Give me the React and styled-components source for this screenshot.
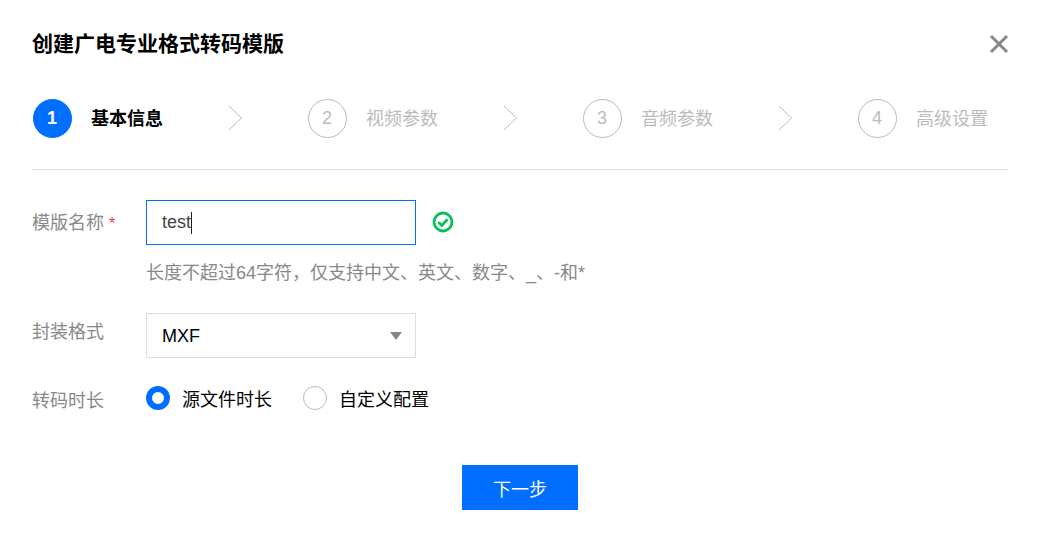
import React from 'react'
import styled, { createGlobalStyle } from 'styled-components'

const steps = [
  { num: 1, label: '基本信息', active: true },
  { num: 2, label: '视频参数' },
  { num: 3, label: '音频参数' },
  { num: 4, label: '高级设置' },
]

export default function App() {
  return (
    <>
      <GlobalStyle />
      <Dialog>
        <Header>
          <Title>创建广电专业格式转码模版</Title>
          <CloseIcon viewBox="0 0 20 20">
            <path d="M2 2 L18 18 M18 2 L2 18" />
          </CloseIcon>
        </Header>

        <Steps>
          {steps.map((step, index) => (
            <React.Fragment key={step.num}>
              <Step>
                <StepNum $active={step.active}>{step.num}</StepNum>
                <StepLabel $active={step.active}>{step.label}</StepLabel>
              </Step>
              {index < steps.length - 1 && (
                <Chevron viewBox="0 0 15 26">
                  <path d="M1 1 L13.5 13 L1 25" />
                </Chevron>
              )}
            </React.Fragment>
          ))}
        </Steps>

        <Form>
          <Row>
            <Label $lh={46}>
              模版名称<Star>*</Star>
            </Label>
            <Control>
              <InputRow>
                <InputBox>
                  test<Caret />
                </InputBox>
                <CheckIcon viewBox="0 0 22 22">
                  <circle cx="11" cy="11" r="9" />
                  <path d="M6.5 11.2 L9.8 14.4 L15.5 8.2" />
                </CheckIcon>
              </InputRow>
              <Hint>长度不超过64字符，仅支持中文、英文、数字、_、-和*</Hint>
            </Control>
          </Row>

          <Row $top={28}>
            <Label $lh={38}>封装格式</Label>
            <SelectBox>
              MXF
              <Arrow />
            </SelectBox>
          </Row>

          <RadioRow>
            <Label $lh={50}>转码时长</Label>
            <RadioGroup>
              <RadioItem>
                <Radio $checked />
                源文件时长
              </RadioItem>
              <RadioItem>
                <Radio />
                自定义配置
              </RadioItem>
            </RadioGroup>
          </RadioRow>
        </Form>

        <Footer>
          <NextButton>下一步</NextButton>
        </Footer>
      </Dialog>
    </>
  )
}

const GlobalStyle = createGlobalStyle`
    html, body {
        margin: 0;
        padding: 0;
        background: #fff;
    }
    body {
        font-family: "Liberation Sans", "Noto Sans CJK SC", sans-serif;
    }
`

const Dialog = styled.div`
    width: 1039px;
    height: 534px;
    box-sizing: border-box;
    padding: 30px 31px 0 32px;
    overflow: hidden;
`

const Header = styled.div`
    display: flex;
    align-items: center;
    justify-content: space-between;
    height: 28px;
`

const Title = styled.h2`
    margin: 0;
    font-size: 21px;
    line-height: 28px;
    font-weight: 700;
    color: #000;
`

const CloseIcon = styled.svg`
    width: 20px;
    height: 20px;
    margin-right: -1px;
    fill: none;
    stroke: #888;
    stroke-width: 3;
`

const Steps = styled.div`
    display: flex;
    align-items: center;
    height: 40px;
    margin-top: 40px;
    padding: 0 20px 31px 1px;
    border-bottom: 1px solid #ddd;
`

const Step = styled.div`
    display: flex;
    align-items: center;
    gap: 19px;
    width: 195px;
    flex: none;
    &:last-child {
        width: auto;
    }
`

const StepNum = styled.span`
    width: 39px;
    height: 39px;
    box-sizing: border-box;
    padding-right: 1px;
    border-radius: 50%;
    display: flex;
    align-items: center;
    justify-content: center;
    font-size: 18px;
    font-weight: ${(props) => (props.$active ? 700 : 400)};
    color: ${(props) => (props.$active ? '#fff' : '#bbb')};
    background: ${(props) => (props.$active ? '#006eff' : '#fff')};
    border: 1px solid ${(props) => (props.$active ? '#006eff' : '#bbb')};
`

const StepLabel = styled.span`
    font-size: 18px;
    line-height: 24px;
    padding-top: 1px;
    font-weight: ${(props) => (props.$active ? 700 : 400)};
    color: ${(props) => (props.$active ? '#000' : '#bbb')};
`

const Chevron = styled.svg`
    width: 15px;
    height: 26px;
    margin-right: 65px;
    flex: none;
    fill: none;
    stroke: #bbb;
    stroke-width: 1;
`

const Form = styled.div`
    margin-top: 30px;
`

const Row = styled.div`
    display: flex;
    margin-top: ${(props) => props.$top || 0}px;
`

const Label = styled.div`
    width: 114px;
    flex: none;
    align-self: flex-start;
    font-size: 18px;
    line-height: ${(props) => props.$lh}px;
    color: #888;
`

const Star = styled.span`
    margin-left: 5px;
    font-size: 16px;
    color: #e54545;
`

const Control = styled.div`
    display: flex;
    flex-direction: column;
`

const InputRow = styled.div`
    display: flex;
    align-items: center;
    gap: 16px;
`

const InputBox = styled.div`
    width: 270px;
    height: 45px;
    box-sizing: border-box;
    padding: 0 15px;
    border: 1px solid #006eff;
    display: flex;
    align-items: center;
    font-size: 18px;
    color: #444;
`

const Caret = styled.span`
    width: 1px;
    height: 22px;
    background: #222;
`

const CheckIcon = styled.svg`
    width: 22px;
    height: 22px;
    margin-bottom: 2px;
    fill: none;
    stroke: #0abf5b;
    stroke-width: 2.8;
`

const Hint = styled.div`
    margin-top: 16px;
    font-size: 18px;
    line-height: 24px;
    color: #888;
`

const SelectBox = styled.div`
    position: relative;
    width: 270px;
    height: 45px;
    box-sizing: border-box;
    padding: 1px 15px 0;
    border: 1px solid #ddd;
    display: flex;
    align-items: center;
    font-size: 18px;
    color: #000;
`

const Arrow = styled.span`
    position: absolute;
    right: 13px;
    top: 18px;
    width: 0;
    height: 0;
    border-left: 6px solid transparent;
    border-right: 6px solid transparent;
    border-top: 8px solid #888;
`

const RadioRow = styled.div`
    display: flex;
    align-items: center;
    margin-top: 18px;
    height: 44px;
`

const RadioGroup = styled.div`
    display: flex;
    align-items: center;
    gap: 31px;
`

const RadioItem = styled.div`
    display: flex;
    align-items: center;
    gap: 12px;
    font-size: 18px;
    color: #000;
`

const Radio = styled.span`
    width: 24px;
    height: 24px;
    box-sizing: border-box;
    border-radius: 50%;
    background: #fff;
    border: ${(props) => (props.$checked ? '6px solid #006eff' : '1px solid #bbb')};
`

const Footer = styled.div`
    display: flex;
    justify-content: center;
    margin-top: 45px;
`

const NextButton = styled.button`
    width: 116px;
    height: 45px;
    padding: 0;
    border: 0;
    background: #006eff;
    color: #fff;
    font-family: inherit;
    font-size: 18px;
`
